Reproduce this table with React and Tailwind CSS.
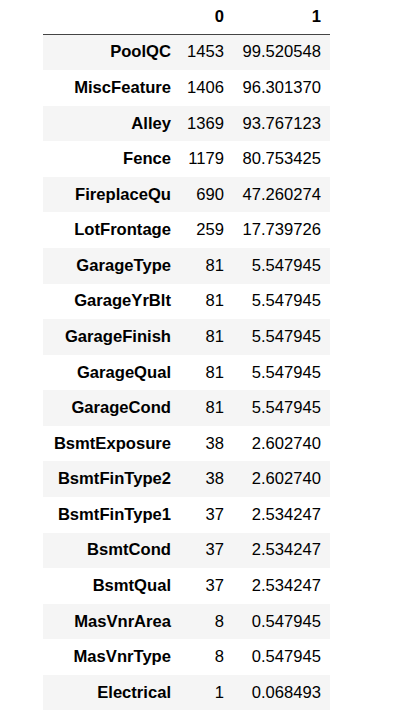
const rows = [
  ['PoolQC', 1453, '99.520548'],
  ['MiscFeature', 1406, '96.301370'],
  ['Alley', 1369, '93.767123'],
  ['Fence', 1179, '80.753425'],
  ['FireplaceQu', 690, '47.260274'],
  ['LotFrontage', 259, '17.739726'],
  ['GarageType', 81, '5.547945'],
  ['GarageYrBlt', 81, '5.547945'],
  ['GarageFinish', 81, '5.547945'],
  ['GarageQual', 81, '5.547945'],
  ['GarageCond', 81, '5.547945'],
  ['BsmtExposure', 38, '2.602740'],
  ['BsmtFinType2', 38, '2.602740'],
  ['BsmtFinType1', 37, '2.534247'],
  ['BsmtCond', 37, '2.534247'],
  ['BsmtQual', 37, '2.534247'],
  ['MasVnrArea', 8, '0.547945'],
  ['MasVnrType', 8, '0.547945'],
  ['Electrical', 1, '0.068493'],
];

export default function App() {
  return (
    <div
      className="w-[417px] h-[720px] bg-white text-black text-[16.6px] overflow-hidden"
      style={{ fontFamily: '"Liberation Sans", Arial, sans-serif' }}
    >
      <div className="ml-[43px] w-[287px]">
        <div className="grid grid-cols-[136px_53px_98px] h-[34.5px] items-center font-bold border-b border-[#444] pt-[1px]">
          <div />
          <div className="text-right pr-[8px]">0</div>
          <div className="text-right pr-[9px]">1</div>
        </div>
        {rows.map(([name, n, pct], i) => (
          <div
            key={name}
            className={`grid grid-cols-[136px_53px_98px] h-[35.58px] items-center pt-[1px] ${
              i % 2 === 0 ? 'bg-[#f5f5f5]' : 'bg-white'
            }`}
          >
            <div className="text-right pr-[8px] font-bold">{name}</div>
            <div className="text-right pr-[8px]">{n}</div>
            <div className="text-right pr-[9px]">{pct}</div>
          </div>
        ))}
      </div>
    </div>
  );
}
